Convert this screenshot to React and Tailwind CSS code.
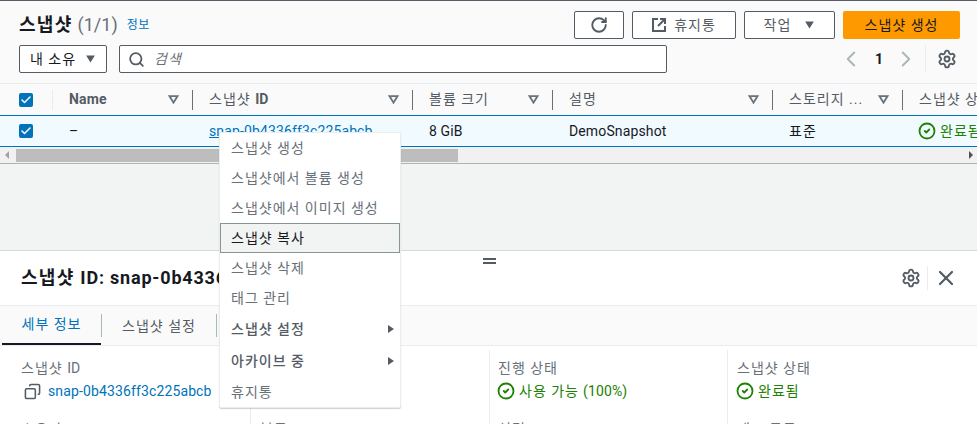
import React from 'react';
import { Check, CircleCheck, Copy, RotateCw, Search, Settings, X, ChevronLeft, ChevronRight } from 'lucide-react';

// latin text runs tighter than the hangul around it
const L = ({ children, className = '' }) => (
  <span className={`tracking-[0.13px] ${className}`}>{children}</span>
);

const Tri = ({ className = '' }) => (
  <svg viewBox="0 0 12 10" className={className}>
    <path d="M0.5 0.5h11L6 9.5z" fill="currentColor" />
  </svg>
);

// outlined filter triangle from the table header
const FilterTri = () => (
  <svg viewBox="0 0 12 10" className="h-[9px] w-[11px] text-[#687078]">
    <path d="M1.5 1.2h9L6 8.5z" fill="none" stroke="currentColor" strokeWidth="2" />
  </svg>
);

const ExternalIcon = () => (
  <svg viewBox="0 0 14 14" className="h-[14px] w-[14px]" fill="none" stroke="currentColor" strokeWidth="2">
    <path d="M6 1H1v12h12V8" />
    <path d="M8 1h5v5" />
    <path d="M13 1L6 8" />
  </svg>
);

const Box = () => (
  <span className="flex h-[14px] w-[14px] items-center justify-center rounded-[2px] bg-[#0073bb]">
    <Check className="h-3 w-3 text-white" strokeWidth={3} />
  </span>
);

const Head = ({ w, children }) => (
  <div className={`${w} flex h-5 shrink-0 items-center border-r border-[#687078] pl-4 pr-[13px]`}>
    <span className="flex-1 truncate pb-[2px] text-sm text-[#545b64]">{children}</span>
    <FilterTri />
  </div>
);

const Cell = ({ w, children }) => (
  <div className={`${w} shrink-0 pl-4 text-sm text-[#16191f]`}>{children}</div>
);

const Done = ({ children }) => (
  <span className="flex items-center gap-[4px] text-sm text-[#1d8102]">
    <CircleCheck className="h-[18px] w-[18px] -ml-px" strokeWidth={2.4} />
    {children}
  </span>
);

const menu = [
  ['스냅샷 생성'],
  ['스냅샷에서 볼륨 생성'],
  ['스냅샷에서 이미지 생성'],
  ['스냅샷 복사', 'hover'],
  ['스냅샷 삭제'],
  ['태그 관리'],
  ['스냅샷 설정', 'sub'],
  ['아카이브 중', 'sub'],
  ['휴지통'],
];

const Menu = () => (
  <div className="absolute left-[219px] top-[132px] z-10 w-[182px] rounded-b-[2px] border border-[#eaeded] bg-white shadow-[0_1px_1px_rgba(0,28,36,0.2)]">
    {menu.map(([label, kind]) => (
      <div
        key={label}
        className={`flex items-center justify-between text-sm ${
          kind === 'hover'
            ? 'h-[30px] border border-[#879596] bg-[#f2f3f3] px-[10px] text-[#16191f]'
            : kind === 'sub'
              ? 'h-[32px] pl-[11px] pr-[6px] font-medium text-[#545b64]'
              : 'h-[30px] px-[11px] text-[#687078]'
        }`}
      >
        {label}
        {kind === 'sub' && (
          <svg viewBox="0 0 6 8" className="h-2 w-[6px] text-[#545b64]">
            <path d="M0 0l6 4-6 4z" fill="currentColor" />
          </svg>
        )}
      </div>
    ))}
  </div>
);

const Btn = ({ w, children }) => (
  <button className={`${w} flex h-7 items-center justify-center gap-2 rounded-[2px] border border-[#545b64] bg-white text-sm text-[#545b64]`}>
    {children}
  </button>
);

const Field = ({ label, children }) => (
  <div>
    <div className="text-sm leading-5 text-[#687078]">{label}</div>
    <div className="mt-[3px] flex h-5 items-center">{children}</div>
  </div>
);

const NextLabel = ({ children }) => (
  <div className="mt-[18px] text-sm text-[#687078]">{children}</div>
);

const App = () => {
  return (
    <div className="relative h-[424px] w-[977px] overflow-hidden bg-[#f2f3f3] font-['Roboto','Noto_Sans_CJK_KR',sans-serif] tracking-[1px]">
      <Menu />

      {/* table panel */}
      <div className="border-t border-[#545b64] bg-[#fafafa]">
        <div className="pl-[19px] pr-[17px] pt-[10px]">
          <div className="flex items-center justify-between">
            <div className="flex items-center">
              <h1 className="text-lg font-bold tracking-[1.3px] text-[#16191f]">스냅샷</h1>
              <span className="ml-[5px] text-lg tracking-normal text-[#687078]">(1/1)</span>
              <a className="ml-[9px] text-xs tracking-[0.5px] text-[#0073bb]">정보</a>
            </div>
            <div className="flex gap-2">
              <Btn w="w-[50px]"><RotateCw className="h-[18px] w-[18px]" strokeWidth={2.5} /></Btn>
              <Btn w="w-[104px]"><ExternalIcon />휴지통</Btn>
              <Btn w="w-[91px]">작업<Tri className="ml-[5px] h-2 w-[11px]" /></Btn>
              <button className="h-7 w-[117px] rounded-[2px] bg-[#ff9900] text-sm text-[#16191f]">스냅샷 생성</button>
            </div>
          </div>
          <div className="mt-[6px] flex items-center">
            <div className="flex h-7 w-[88px] items-center justify-between rounded-[2px] border border-[#545b64] bg-white px-[10px] text-sm text-[#16191f]">
              내 소유<Tri className="h-2 w-[11px] text-[#545b64]" />
            </div>
            <div className="ml-3 flex h-7 w-[548px] items-center rounded-[2px] border border-[#545b64] bg-white pl-2 text-sm italic text-[#687078]">
              <Search className="mr-[9px] h-[17px] w-[17px] text-[#545b64]" strokeWidth={2.5} />검색
            </div>
            <ChevronLeft className="ml-[171px] h-[26px] w-[26px] text-[#aab7b8]" strokeWidth={1.8} />
            <span className="ml-[11px] text-sm font-bold tracking-normal text-[#16191f]">1</span>
            <ChevronRight className="ml-[10px] h-[26px] w-[26px] text-[#aab7b8]" strokeWidth={1.8} />
            <div className="ml-[6px] flex h-7 items-center border-l border-[#eaeded] pl-[11px]">
              <Settings className="h-5 w-5 text-[#545b64]" strokeWidth={2.2} />
            </div>
          </div>
        </div>

        {/* table header */}
        <div className="mt-[10px] flex h-[32px] items-center overflow-hidden border-t border-[#eaeded]">
          <div className="flex h-5 w-[53px] shrink-0 items-center border-r border-[#eaeded] pl-[19px]"><Box /></div>
          <Head w="w-[140px]"><L className="font-bold">Name</L></Head>
          <Head w="w-[220px]">스냅샷 <L className="font-bold">ID</L></Head>
          <Head w="w-[140px]">볼륨 크기</Head>
          <Head w="w-[220px]">설명</Head>
          <Head w="w-[130px]">스토리지 ...</Head>
          <div className="shrink-0 whitespace-nowrap pb-[2px] pl-4 text-sm text-[#545b64]">스냅샷 상태</div>
        </div>

        {/* selected row */}
        <div className="flex h-[32px] items-center overflow-hidden border-y border-[#0073bb] bg-[#f1faff]">
          <div className="w-[53px] shrink-0 pl-[19px]"><Box /></div>
          <Cell w="w-[140px]">–</Cell>
          <Cell w="w-[220px]"><L className="text-[#0073bb] underline">snap-0b4336ff3c225abcb</L></Cell>
          <Cell w="w-[140px]"><L>8 GiB</L></Cell>
          <Cell w="w-[220px]"><L>DemoSnapshot</L></Cell>
          <Cell w="w-[130px]">표준</Cell>
          <div className="shrink-0 whitespace-nowrap pl-4"><Done>완료됨</Done></div>
        </div>

        {/* horizontal scrollbar */}
        <div className="flex h-[17px] items-center border-b border-[#aab7b8] bg-[#f1f1f1]">
          <svg viewBox="0 0 4 8" className="ml-[5px] h-2 w-1 text-[#a3a3a3]"><path d="M4 0L0 4l4 4z" fill="currentColor" /></svg>
          <div className="ml-[7px] h-[13px] w-[442px] bg-[#bdbdbd]" />
          <svg viewBox="0 0 4 8" className="ml-[511px] h-2 w-1 text-[#505050]"><path d="M0 0l4 4-4 4z" fill="currentColor" /></svg>
        </div>
      </div>

      {/* split panel */}
      <div className="relative mt-[86px] h-[174px] border-t border-[#d5dbdb] bg-white">
        <div className="absolute left-[483px] top-[7px] h-[6px] w-[13px] border-y-2 border-[#545b64]" />
        <div className="flex h-[55px] items-center justify-between border-b border-[#eaeded] pl-[21px] pr-[19px]">
          <h2 className="whitespace-nowrap text-lg font-bold tracking-[1.3px] text-[#16191f]">
            스냅샷 <span className="tracking-[0.8px]">ID: snap-0b4336ff3c225abcb</span>
          </h2>
          <div className="flex items-center">
            <Settings className="h-5 w-5 text-[#545b64]" strokeWidth={2.2} />
            <div className="ml-[6px] mr-[6px] h-6 border-l border-[#eaeded]" />
            <X className="h-6 w-6 text-[#545b64]" strokeWidth={2.2} />
          </div>
        </div>
        <div className="flex h-10 items-stretch border-b border-[#eaeded] bg-[#fafafa] pl-[2px]">
          <div className="flex w-[99px] items-center justify-center border-b-2 border-[#16191f] pb-px text-sm text-[#0073bb]">세부 정보</div>
          <div className="my-2 flex w-[116px] items-center justify-center border-x border-[#aab7b8] text-sm text-[#545b64]">스냅샷 설정</div>
        </div>
        <div className="grid grid-cols-[250px_239px_238px_1fr] pt-1">
          <div className="pl-[21px] pt-2">
            <Field label={<>스냅샷 <L>ID</L></>}>
              <Copy className="ml-[3px] mr-[7px] h-[17px] w-[17px] scale-x-[-1] text-[#545b64]" strokeWidth={2.2} />
              <L className="text-sm text-[#0073bb]">snap-0b4336ff3c225abcb</L>
            </Field>
            <NextLabel>소유자</NextLabel>
          </div>
          <div className="border-l border-[#eaeded] pl-[9px] pt-2">
            <div className="h-[43px]" />
            <NextLabel>볼륨</NextLabel>
          </div>
          <div className="border-l border-[#eaeded] pl-[8px] pt-2">
            <Field label="진행 상태"><Done>사용 가능 <L>(100%)</L></Done></Field>
            <NextLabel>설명</NextLabel>
          </div>
          <div className="border-l border-[#eaeded] pl-[9px] pt-2">
            <Field label="스냅샷 상태"><Done>완료됨</Done></Field>
            <NextLabel>태그 목록</NextLabel>
          </div>
        </div>
      </div>
    </div>
  );
};

export default App;
